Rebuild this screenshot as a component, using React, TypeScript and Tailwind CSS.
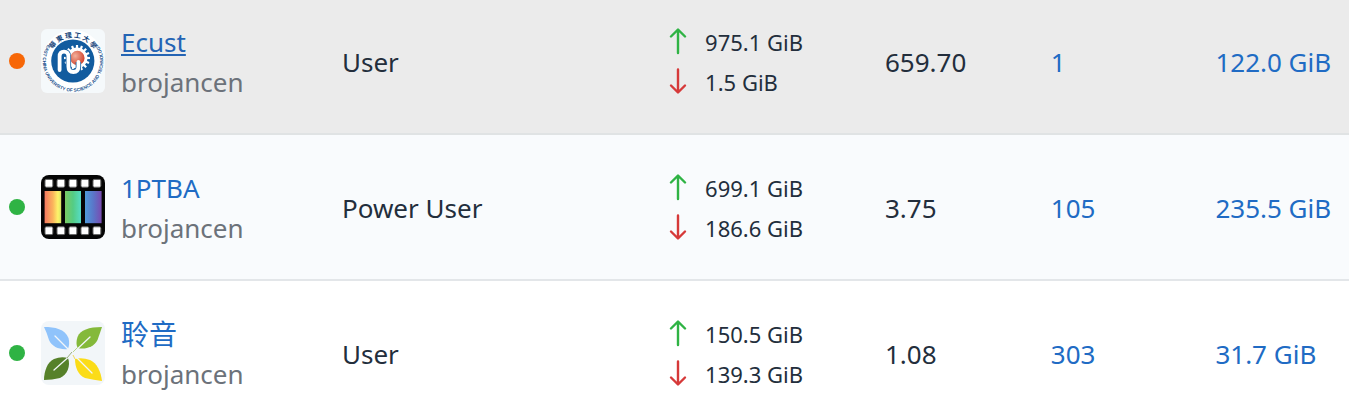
import type { ReactNode } from "react";

function UniversityLogo() {
  const teeth = Array.from({ length: 16 }, (_, i) => i * 22.5);
  const monogram = "M18.6 41 V27.500 Q18.6 22.6 23 22.6 Q27.4 22.6 27.4 27.500 V37.500 Q27.4 43 32.4 43 Q37.4 43 37.4 37.500 V33";
  return (
    <svg viewBox="0 0 64 64" className="size-16 shrink-0" role="img" aria-label="Ecust logo">
      <defs>
        <path id="seal-top" d="M8.6 32 A23.4 23.4 0 0 1 55.4 32" />
        <path id="seal-bottom" d="M7.6 14.6 A30.2 30.2 0 1 0 55.6 13.6" />
        <radialGradient id="seal-sun" cx="35%" cy="35%" r="75%">
          <stop offset="0" stopColor="#f3b09b" />
          <stop offset="1" stopColor="#cf3a24" />
        </radialGradient>
      </defs>
      <rect width="64" height="64" rx="6" fill="#f5f9fb" />
      <circle cx="32" cy="32" r="31" fill="#fff" />
      <circle cx="31.8" cy="32" r="21.6" fill="#125c9f" />
      {teeth.map((angle) => (
        <rect key={angle} x="34.9" y="16" width="2.2" height="5" fill="#fff" transform={`rotate(${angle} 36 29)`} />
      ))}
      <circle cx="36" cy="29" r="10.6" fill="#fff" />
      <circle cx="36.4" cy="29" r="7.2" fill="url(#seal-sun)" />
      <path d={monogram} fill="none" stroke="#125c9f" strokeWidth="5.4" />
      <path d={monogram} fill="none" stroke="#fff" strokeWidth="3.8" strokeLinecap="round" />
      <text fill="#17457a" fontSize="6.8" fontWeight="700" fontFamily="'Noto Sans CJK TC', sans-serif">
        <textPath href="#seal-top" startOffset="50%" textAnchor="middle">
          華 東 理 工 大 學
        </textPath>
      </text>
      <text
        fill="#174f8c"
        fontSize="4.6"
        fontWeight="700"
        fontFamily="'Liberation Sans Narrow', 'Liberation Sans', sans-serif"
      >
        <textPath href="#seal-bottom" startOffset="50%" textAnchor="middle">
          EAST CHINA UNIVERSITY OF SCIENCE AND TECHNOLOGY
        </textPath>
      </text>
    </svg>
  );
}

function FilmLogo() {
  const holes = [4, 16, 28, 40, 52];
  return (
    <svg viewBox="0 0 64 64" className="size-16 shrink-0" role="img" aria-label="1PTBA logo">
      <defs>
        <linearGradient id="film-warm">
          <stop offset="0" stopColor="#f5785f" />
          <stop offset="0.5" stopColor="#fbb45c" />
          <stop offset="0.8" stopColor="#fdf36a" />
          <stop offset="1" stopColor="#d8e565" />
        </linearGradient>
        <linearGradient id="film-green">
          <stop offset="0" stopColor="#7bcb62" />
          <stop offset="0.5" stopColor="#54cc84" />
          <stop offset="1" stopColor="#56dcc6" />
        </linearGradient>
        <linearGradient id="film-cool">
          <stop offset="0" stopColor="#4f9bdb" />
          <stop offset="0.5" stopColor="#5a76c9" />
          <stop offset="1" stopColor="#7a4bb0" />
        </linearGradient>
      </defs>
      <rect width="64" height="64" rx="8" fill="#050505" />
      {holes.map((x) => (
        <g key={x} fill="#fff" stroke="#666" strokeWidth="1">
          <rect x={x} y="4.4" width="7.8" height="7.8" rx="1.4" />
          <rect x={x} y="51.8" width="7.8" height="7.8" rx="1.4" />
        </g>
      ))}
      <rect x="3.6" y="16" width="16.6" height="32.2" fill="url(#film-warm)" />
      <rect x="24" y="16" width="16" height="32.2" fill="url(#film-green)" />
      <rect x="44" y="16" width="16.6" height="32.2" fill="url(#film-cool)" />
    </svg>
  );
}

function LeafLogo() {
  return (
    <svg viewBox="0 0 64 64" className="size-16 shrink-0" role="img" aria-label="聆音 logo">
      <rect width="64" height="64" rx="8" fill="#f2f6f9" />
      <path d="M3 6 C14 6 24 8 27.500 17 Q29 23 27 28 C19 29 11 26 8 19 Q6 12 3 6Z" fill="#8fc3fb" />
      <path d="M61 6 C48 6 39 9 36.500 16 Q34.500 22 36.500 27 C44 29 53 26 56.500 19 Q59 12 61 6Z" fill="#84b93a" />
      <path d="M3 59 C3 51 6 41 13 38 Q20 35 27 37 C30 45 26 54 19 57 Q11 59 3 59Z" fill="#56812a" />
      <path d="M61 60 C60 51 56 42 49 39 Q41 36 34 38 C34 46 37 54 44 57 Q53 59 61 60Z" fill="#fbdc18" />
      <g fill="none" stroke="#f2f6f9" strokeWidth="1.3" strokeLinecap="round">
        <path d="M14 15 L31 32" />
        <path d="M49 16 L32 32" />
        <path d="M13 49 L31 33" />
        <path d="M51 52 L32 33" />
      </g>
      <path d="M26 37 L31 31" stroke="#9aae80" strokeWidth="1" />
      <path d="M36 27 L32 31" stroke="#b9d48f" strokeWidth="1" />
      <path d="M34 38 L32 34" stroke="#f0d85e" strokeWidth="1" />
    </svg>
  );
}

function Arrow({ up }: { up: boolean }) {
  return (
    <svg
      viewBox="0 0 18 28"
      className={up ? "h-7 w-[18px] text-[#2fb344]" : "h-7 w-[18px] text-[#d63939]"}
      fill="none"
      stroke="currentColor"
      strokeWidth="2.4"
      strokeLinecap="round"
      strokeLinejoin="round"
      role="img"
      aria-label={up ? "Uploaded" : "Downloaded"}
    >
      <path d={up ? "M9 25 V2 M2 8.500 L9 1.500 L16 8.500" : "M9 1.500 V24 M2 17.500 L9 24.500 L16 17.500"} />
    </svg>
  );
}

type Site = {
  name: string;
  logo: ReactNode;
  online: boolean;
  level: string;
  up: string;
  down: string;
  ratio: string;
  seeding: string;
  size: string;
  rowClass: string;
  cellClass: string;
  linkClass: string;
};

const sites: Site[] = [
  {
    name: "Ecust",
    logo: <UniversityLogo />,
    online: false,
    level: "User",
    up: "975.1 GiB",
    down: "1.5 GiB",
    ratio: "659.70",
    seeding: "1",
    size: "122.0 GiB",
    rowClass: "bg-[#ebebeb] border-b-2 border-[#e0e3e4]",
    cellClass: "pt-[22px] pb-[31px]",
    linkClass: "text-[26px] text-[#2464b4] underline decoration-2 underline-offset-2",
  },
  {
    name: "1PTBA",
    logo: <FilmLogo />,
    online: true,
    level: "Power User",
    up: "699.1 GiB",
    down: "186.6 GiB",
    ratio: "3.75",
    seeding: "105",
    size: "235.5 GiB",
    rowClass: "bg-[#f9fbfd] border-b-2 border-[#e3e6e9]",
    cellClass: "pt-[33px] pb-[31px]",
    linkClass: "text-[26px] text-[#206bc4]",
  },
  {
    name: "聆音",
    logo: <LeafLogo />,
    online: true,
    level: "User",
    up: "150.5 GiB",
    down: "139.3 GiB",
    ratio: "1.08",
    seeding: "303",
    size: "31.7 GiB",
    rowClass: "bg-white",
    cellClass: "pt-[33px] pb-[10px]",
    linkClass: "text-[28px] text-[#206bc4]",
  },
];

function SiteRow({ site }: { site: Site }) {
  return (
    <tr className={site.rowClass}>
      <td className={site.cellClass}>
        <div className="flex items-center pl-[9px]">
          <div className="mb-0.5 flex items-center gap-4">
            <span
              className={
                site.online
                  ? "size-4 shrink-0 rounded-full bg-[#2fb344]"
                  : "size-4 shrink-0 rounded-full bg-[#f76707]"
              }
            />
            {site.logo}
          </div>
          <div className="ml-4">
            <div className="h-10">
              <a href="#site" className={site.linkClass}>
                {site.name}
              </a>
            </div>
            <div className="text-[#6c727a]">brojancen</div>
          </div>
        </div>
      </td>
      <td className={site.cellClass}>{site.level}</td>
      <td className={site.cellClass}>
        <div className="text-[22px] leading-10">
          <div className="flex items-center gap-[18px]">
            <Arrow up />
            <span>{site.up}</span>
          </div>
          <div className="flex items-center gap-[18px]">
            <Arrow up={false} />
            <span>{site.down}</span>
          </div>
        </div>
      </td>
      <td className={site.cellClass}>{site.ratio}</td>
      <td className={site.cellClass}>
        <a href="#seeding" className="text-[#206bc4]">
          {site.seeding}
        </a>
      </td>
      <td className={site.cellClass}>
        <a href="#size" className="text-[#206bc4]">
          {site.size}
        </a>
      </td>
    </tr>
  );
}

export default function App() {
  return (
    <table className="w-full table-fixed border-collapse whitespace-nowrap bg-white text-left font-['Noto_Sans','Noto_Sans_CJK_SC',sans-serif] text-[26px] leading-10 text-[#232e3c]">
      <colgroup>
        <col className="w-[25.35%]" />
        <col className="w-[24.25%]" />
        <col className="w-[16%]" />
        <col className="w-[12.3%]" />
        <col className="w-[12.2%]" />
        <col />
      </colgroup>
      <tbody>
        {sites.map((site) => (
          <SiteRow key={site.name} site={site} />
        ))}
      </tbody>
    </table>
  );
}
